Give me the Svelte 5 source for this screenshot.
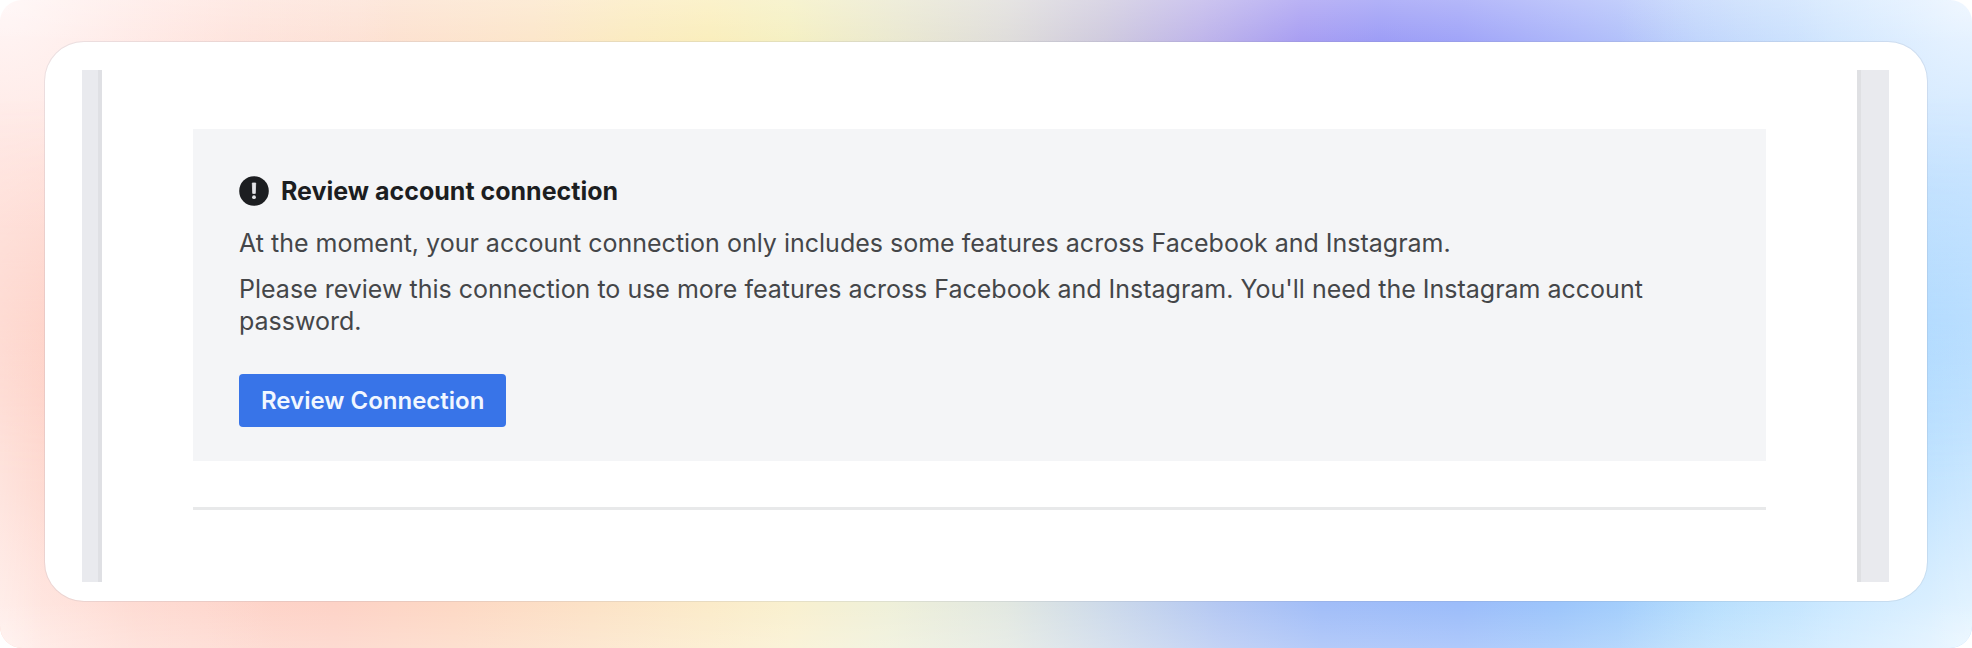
<script>
  const title = "Review account connection";

  const messages = [
    "At the moment, your account connection only includes some features across Facebook and Instagram.",
    "Please review this connection to use more features across Facebook and Instagram. You'll need the Instagram account password.",
  ];

  let reviewing = false;
</script>

<div class="backdrop">
  <main class="window">
    <div class="rail rail-left"></div>

    <div class="content">
      <section class="notice" aria-labelledby="notice-title">
        <header>
          <svg class="icon" viewBox="0 0 30 30" aria-hidden="true">
            <circle cx="15" cy="15" r="14.8" fill="#1c1e21" />
            <path
              d="M13.3 7h3.4l-.4 10.4h-2.6z"
              fill="#e4e5e8"
              stroke="#e4e5e8"
              stroke-width=".8"
              stroke-linejoin="round"
            />
            <circle cx="15" cy="21.2" r="1.9" fill="#e4e5e8" />
          </svg>
          <h1 id="notice-title">{title}</h1>
        </header>

        {#each messages as message}
          <p>{message}</p>
        {/each}

        <button type="button" on:click={() => (reviewing = true)} disabled={reviewing}>
          Review Connection
        </button>
      </section>

      <hr />
    </div>

    <div class="rail rail-right"></div>
  </main>
</div>

<style>
  :global(body) {
    margin: 0;
    background: #fff;
    font-family: Inter, "Liberation Sans", sans-serif;
  }

  .backdrop {
    position: relative;
    box-sizing: border-box;
    min-height: 100vh;
    padding: 41px 44px 46px;
    border-radius: 22px;
    overflow: hidden;
    display: flex;
    background:
      linear-gradient(rgba(255, 255, 255, 0.22), transparent 44px),
      radial-gradient(ellipse 20% 60% at 0 0, #fff6f6, rgba(255, 240, 238, 0.6) 50%, rgba(255, 236, 232, 0)),
      radial-gradient(ellipse 18% 60% at 100% 0, #ecf5ff, rgba(220, 236, 255, 0.5) 50%, rgba(210, 230, 255, 0)),
      linear-gradient(
        90deg,
        #fed4ca 0%,
        #fed6cc 8%,
        #fde0d2 18%,
        #fce6ca 27%,
        #fbebc0 32%,
        #faeebc 36%,
        #f5f0c2 40%,
        #ebe9cf 45%,
        #dfddda 51%,
        #cfcade 56%,
        #beb4ea 61%,
        #a79df2 66%,
        #9c9cf6 70%,
        #9fa3f8 74%,
        #adb8fa 80%,
        #b8cefb 86%,
        #bddbfd 93%,
        #b4dcff 100%
      );
  }

  .backdrop::before {
    content: "";
    position: absolute;
    inset: 0;
    background:
      linear-gradient(to top, rgba(255, 255, 255, 0.2), transparent 46px),
      linear-gradient(to right, rgba(255, 255, 255, 0.25), transparent 44px),
      linear-gradient(to left, rgba(255, 255, 255, 0.15), transparent 44px),
      radial-gradient(ellipse 14% 50% at 0 100%, #ffece8, rgba(255, 232, 226, 0.4) 50%, rgba(255, 228, 222, 0)),
      radial-gradient(ellipse 18% 50% at 100% 100%, #e6f5ff, rgba(216, 238, 255, 0.5) 50%, rgba(206, 233, 255, 0)),
      linear-gradient(
        90deg,
        #fed2c8 0%,
        #fed4ca 10%,
        #fdd2c6 17%,
        #fdd8c4 23%,
        #fce2c6 30%,
        #fbebc9 36%,
        #f9f0cf 40%,
        #eff0d9 45%,
        #e2e8e1 51%,
        #cddaea 56%,
        #b3c7f3 62%,
        #a1bdf8 67%,
        #9bbcfa 74%,
        #9cc5fb 79%,
        #addafd 87%,
        #b5dfff 93%,
        #acd8ff 100%
      );
    mask-image: linear-gradient(transparent 15%, #000 75%);
  }

  .window {
    position: relative;
    box-sizing: border-box;
    flex: 1;
    display: flex;
    justify-content: space-between;
    padding: 28px 38px 19px 37px;
    background: #fff;
    background-clip: padding-box;
    border: 1px solid rgba(120, 130, 150, 0.14);
    border-radius: 40px;
  }

  .rail {
    background: #e9eaee;
  }

  .rail-left {
    width: 16px;
    border-right: 4px solid #dfe0e4;
  }

  .rail-right {
    width: 28px;
    border-left: 4px solid #dfe0e3;
  }

  .content {
    flex: 1;
    padding: 59px 91px 0;
  }

  .notice {
    padding: 46px;
    padding-bottom: 34px;
    background: #f4f5f7;
  }

  header {
    display: flex;
    align-items: center;
    gap: 12px;
    margin-bottom: 20px;
  }

  .icon {
    width: 30px;
    height: 30px;
  }

  h1 {
    margin: 0;
    font-size: 25px;
    line-height: 32px;
    font-weight: 700;
    color: #1c1e21;
  }

  p {
    margin: 0 0 14px;
    font-size: 25px;
    line-height: 32px;
    color: #444649;
  }

  button {
    margin-top: 23px;
    height: 53px;
    padding: 0 22px;
    border: none;
    border-radius: 4px;
    background: #3874e8;
    color: #f1f7ff;
    font-family: inherit;
    font-size: 24px;
    font-weight: 600;
    cursor: pointer;
  }

  hr {
    height: 3px;
    margin: 46px 0 0;
    border: none;
    background: #e8e9ea;
  }
</style>
